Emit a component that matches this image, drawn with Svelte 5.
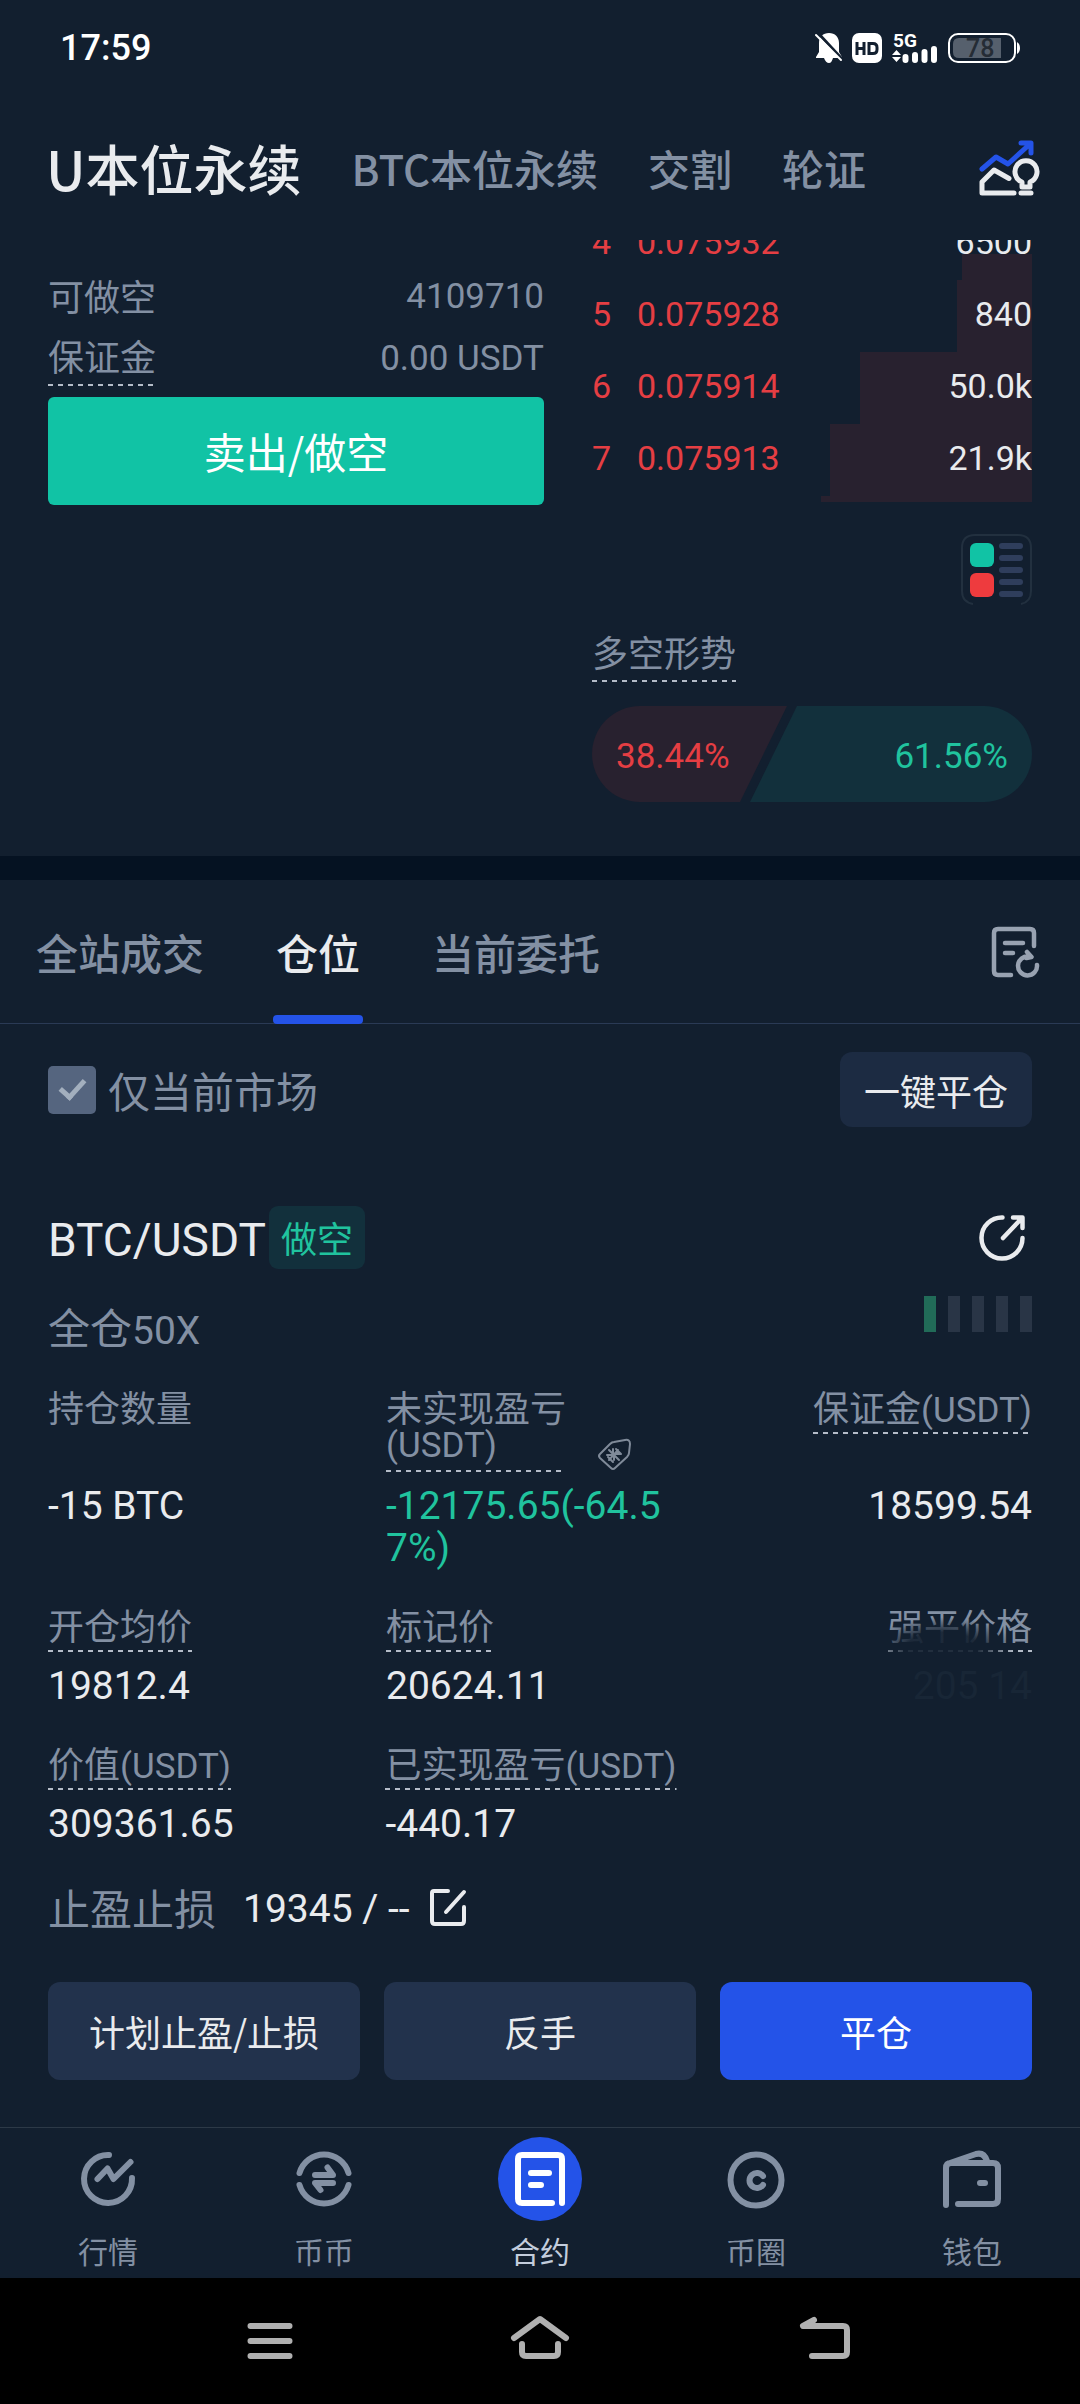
<script lang="ts">
	interface Ask { level: number; price: string; amount: string; depth: number; }
	interface Stat {
		label?: string;
		unit?: string;
		value?: string;
		plain?: boolean;
		wrap?: boolean;
		tag?: boolean;
		faded?: boolean;
		tone?: string;
	}

	const markets = ['U本位永续', 'BTC本位永续', '交割', '轮证'];
	let market = $state(0);

	const asks: Ask[] = [
		{ level: 4, price: '0.075932', amount: '6500', depth: 16 },
		{ level: 5, price: '0.075928', amount: '840', depth: 17 },
		{ level: 6, price: '0.075914', amount: '50.0k', depth: 39 },
		{ level: 7, price: '0.075913', amount: '21.9k', depth: 46 }
	];

	const tabs = ['全站成交', '仓位', '当前委托'];
	let tab = $state(1);
	let onlyCurrent = $state(true);

	const stats: Stat[][] = [
		[
			{ label: '持仓数量', value: '-15 BTC', plain: true },
			{ label: '未实现盈亏', unit: '(USDT)', value: '-12175.65(-64.57%)', wrap: true, tag: true, tone: 'up' },
			{ label: '保证金', unit: '(USDT)', value: '18599.54' }
		],
		[
			{ label: '开仓均价', value: '19812.4' },
			{ label: '标记价', value: '20624.11' },
			{ label: '强平价格', value: '205 14', faded: true }
		],
		[
			{ label: '价值', unit: '(USDT)', value: '309361.65' },
			{ label: '已实现盈亏', unit: '(USDT)', value: '-440.17' },
			{}
		]
	];

	const nav = [
		{ id: 'quotes', label: '行情' },
		{ id: 'spot', label: '币币' },
		{ id: 'contract', label: '合约' },
		{ id: 'circle', label: '币圈' },
		{ id: 'wallet', label: '钱包' }
	];
</script>

<div class="app">
	<div class="status">
		<span class="status__time">17:59</span>
		<div class="status__icons">
			<svg width="28" height="30" viewBox="0 0 28 30">
				<path d="M14 0c6 0 10 4 10 10v9l3 5v1H18c-1 3-2 5-4 5s-4-2-5-5H1v-1l3-5v-9c0-6 4-10 10-10z" fill="#fff" />
				<path d="M3 0l24 26" stroke="#121f2f" stroke-width="3" />
				<path d="M1 2l25 25" stroke="#fff" stroke-width="2" stroke-linecap="round" />
			</svg>
			<svg width="30" height="30" viewBox="0 0 30 30">
				<rect width="30" height="30" rx="7" fill="#fff" />
				<path d="M5 9v13M12 9v13M5 15.500h7M17 10.500h4q4 0 4 4v2q0 4-4 4h-4z" fill="none" stroke="#121f2f" stroke-width="3" />
			</svg>
			<svg width="48" height="30" viewBox="0 0 48 30">
				<text x="2" y="14" class="status__net">5G</text>
				<path d="M1 22l4.500-5 4.500 5zM1 24l4.500 5 4.500-5z" fill="#fff" />
				<path d="M14.500 24v3M24 22v5M33.500 19v8M43 16v11" stroke="#fff" stroke-width="6" stroke-linecap="round" />
			</svg>
			<svg width="72" height="30" viewBox="0 0 72 30">
				<rect x="1" y="1" width="66" height="28" rx="9" fill="none" stroke="#fff" stroke-width="2" />
				<path d="M11 5h42v20H11q-6 0-6-6v-8q0-6 6-6z" fill="#56606d" />
				<path d="M69 9q3 2 3 6t-3 6z" fill="#fff" />
				<text x="18" y="24" class="status__level">78</text>
			</svg>
		</div>
	</div>

	<header class="header">
		<nav class="markets">
			{#each markets as name, i}
				<button class="markets__item" class:active={market === i} onclick={() => (market = i)}>{name}</button>
			{/each}
		</nav>
		<button class="icon-button" aria-label="图表">
			<svg width="62" height="58" viewBox="0 0 62 58" fill="none" stroke-width="5" stroke-linecap="round" stroke-linejoin="round">
				<path d="M4 30L18 18l12 7L52 5M43 4h10v10" stroke="#2453e8" />
				<path d="M31 39.500L16 31 4 43v11h32M44 48v-5a11 11 0 1 1 8 0v5zM43 54h10" stroke="#e9ebee" />
			</svg>
		</button>
	</header>

	<section class="trade">
		<div class="order">
			<div class="order__row">
				<span>可做空</span>
				<span class="latin">4109710</span>
			</div>
			<div class="order__row order__row--margin">
				<span class="dashed">保证金</span>
				<span class="latin">0.00 USDT</span>
			</div>
			<button class="order__submit">卖出/做空</button>
		</div>

		<div class="side">
			<div class="book">
				{#each asks as ask}
					<div class="book__row">
						<span class="book__depth" style="width: {ask.depth}%"></span>
						<span class="book__level">{ask.level}</span>
						<span class="book__price">{ask.price}</span>
						<span class="book__amount">{ask.amount}</span>
					</div>
				{/each}
				<div class="book__tail"></div>
			</div>
			<button class="icon-button book-mode" aria-label="盘口样式">
				<svg width="71" height="70" viewBox="0 0 71 70">
					<path d="M12 70Q1 68 1 57V14Q1 1 14 1H57Q70 1 70 14V57Q70 68 60 70" fill="none" stroke="#22303f" stroke-width="2" />
					<rect x="9" y="9" width="24" height="24" rx="6" fill="#11c3a5" />
					<rect x="9" y="39" width="24" height="24" rx="6" fill="#ee3b3e" />
					<path d="M41 12h18M41 24h18M41 36h18M41 48h18M41 60h18" stroke="#2f3e5c" stroke-width="6" stroke-linecap="round" />
				</svg>
			</button>
			<span class="dashed side__title">多空形势</span>
			<div class="ratio">
				<svg class="ratio__shape" viewBox="0 0 440 96" preserveAspectRatio="none">
					<path d="M48 0H195L148 96H48A48 48 0 0 1 48 0z" fill="#28212f" />
					<path d="M205 0H392A48 48 0 0 1 392 96H158z" fill="#12303c" />
				</svg>
				<span class="ratio__short">38.44%</span>
				<span class="ratio__long">61.56%</span>
			</div>
		</div>
	</section>

	<section class="panel">
		<div class="tabs">
			{#each tabs as name, i}
				<button class="tabs__item" class:active={tab === i} onclick={() => (tab = i)}>{name}</button>
			{/each}
			<button class="icon-button tabs__history" aria-label="历史记录">
				<svg width="50" height="54" viewBox="0 0 50 54" fill="none" stroke="#98a2b1" stroke-width="4.500" stroke-linecap="round" stroke-linejoin="round">
					<path d="M44 21V8q0-4-4-4H8Q4 4 4 8v38q0 4 4 4h13M15 18h18M15 28h8" />
					<path d="M47 40a9.500 9.500 0 1 1-8-8.500M37 27l4.500 5-5 1" />
				</svg>
			</button>
		</div>

		<div class="filter">
			<label class="filter__check">
				<input type="checkbox" bind:checked={onlyCurrent} />
				仅当前市场
			</label>
			<button class="filter__close">一键平仓</button>
		</div>

		<article class="position">
			<div class="position__head">
				<h2>BTC/USDT</h2>
				<span class="position__side">做空</span>
				<button class="icon-button position__share" aria-label="分享">
					<svg width="48" height="48" viewBox="0 0 48 48" fill="none" stroke="#e9ebee" stroke-width="4.500" stroke-linecap="round" stroke-linejoin="round">
						<path d="M24.500 3.500A20.500 20.500 0 1 0 44.500 24M25 24L44 4M35 3.500h9.500V14" />
					</svg>
				</button>
			</div>
			<div class="position__mode">
				<span>全仓<span class="big">50X</span></span>
				<div class="risk">
					{#each [1, 2, 3, 4, 5] as n}
						<span class:on={n === 1}></span>
					{/each}
				</div>
			</div>

			<div class="stats">
				{#each stats as row}
					<div class="stats__row">
						{#each row as s}
							<div class="stats__label">
								{#if s.label}
									<span class:dashed={!s.plain} class:wrap={s.wrap} class:faded={s.faded}>{s.label}{#if s.unit}<span class="latin">{s.unit}</span>{/if}</span>
								{/if}
								{#if s.tag}
									<svg class="stats__tag" width="36" height="36" viewBox="0 0 36 36" fill="none" stroke="#7f8a99" stroke-width="2" stroke-linecap="round" stroke-linejoin="round">
										<path d="M18 6l11-2q5-1 5 4l-1 9q0 2-2 4L19 32q-2 2-4 0L4 22q-2-2 0-4L14 8q2-2 4-2z" />
										<path d="M13 14l10 10M17 13v6h-6M24 18h-6v6M20 13l5 5M12 21l5 5M22 14l-9 10" />
									</svg>
								{/if}
							</div>
						{/each}
						{#each row as s}
							<div class="stats__value {s.tone ?? ''}" class:ghost={s.faded}>{s.value ?? ''}</div>
						{/each}
					</div>
				{/each}
			</div>

			<div class="stop">
				<span class="stop__label">止盈止损</span>
				<span class="big">19345 / --</span>
				<button class="icon-button" aria-label="编辑">
					<svg width="40" height="40" viewBox="0 0 40 40" fill="none" stroke="#e9ebee" stroke-width="4" stroke-linecap="round" stroke-linejoin="round">
						<path d="M20 4H6Q4 4 4 6v28q0 3 3 3h26q3 0 3-3V20M36 5L18 25" />
					</svg>
				</button>
			</div>

			<div class="actions">
				<button>计划止盈/止损</button>
				<button>反手</button>
				<button class="primary">平仓</button>
			</div>
		</article>
	</section>

	<nav class="bottom">
		{#each nav as item}
			<a href="#{item.id}" class="bottom__item" class:active={item.id === 'contract'}>
				<span class="bottom__icon">
					<svg width="60" height="60" viewBox="0 0 60 60" fill="none" stroke="currentColor" stroke-width="6" stroke-linecap="round" stroke-linejoin="round">
						{#if item.id === 'quotes'}
							<path d="M31 6A24 24 0 1 0 54 29M19.500 30L29.500 19.500 35.500 30l17-17" />
						{:else if item.id === 'spot'}
							<path d="M5.500 24a25.500 25.500 0 0 1 49 0M5.500 36a25.500 25.500 0 0 0 49 0M21 26h18l-5.500-7.500M39 34H21l5.500 7" />
						{:else if item.id === 'contract'}
							<path d="M42 54H12q-4 0-4-4V10q0-4 4-4h36q4 0 4 4v44M21 24h18M21 36h10" />
						{:else if item.id === 'circle'}
							<circle cx="30" cy="31" r="25.500" />
							<path d="M37 27a7.500 7.500 0 1 0 0 9" />
						{:else}
							<path d="M4 56V19q0-5 5-5h42q5 0 5 5v31q0 5-5 5H16M8 14L34 5q8-2 11 7M38 34h5" />
						{/if}
					</svg>
				</span>
				{item.label}
			</a>
		{/each}
	</nav>

	<div class="system">
		<button class="icon-button" aria-label="最近任务">
			<svg width="60" height="48" viewBox="0 0 60 48" fill="none" stroke="#b0b0b0" stroke-width="6" stroke-linecap="round">
				<path d="M10.500 9h39M10.500 24h39M10.500 39h39" />
			</svg>
		</button>
		<button class="icon-button" aria-label="主页">
			<svg width="60" height="48" viewBox="0 0 60 48" fill="none" stroke="#b0b0b0" stroke-width="6" stroke-linecap="round" stroke-linejoin="round">
				<path d="M4 21L30 2l26 19M12 27v8q0 4 4 4h28q4 0 4-4v-8" />
			</svg>
		</button>
		<button class="icon-button system__back" aria-label="返回">
			<svg width="60" height="48" viewBox="0 0 60 48" fill="none" stroke="#b0b0b0" stroke-width="6" stroke-linecap="round" stroke-linejoin="round">
				<path d="M19 3L8 9h40q4 0 4 4v22q0 4-4 4H17" />
			</svg>
		</button>
	</div>
</div>

<style>
	:global(body) { background: #121f2f; }

	.app {
		--muted: #8390a3;
		--text: #e9ebee;
		--red: #e53e43;
		--green: #20c39e;
		--blue: #2453e8;
		--digits: Roboto, "Noto Sans CJK SC", sans-serif;
		font-family: "Noto Sans CJK SC", sans-serif;
		font-size: 36px;
		line-height: 48px;
		color: var(--muted);
		background: #121f2f;
	}

	button {
		font: inherit;
		color: inherit;
		background: none;
		border: none;
		padding: 0;
		white-space: nowrap;
		cursor: pointer;
	}

	svg { display: block; flex-shrink: 0; overflow: visible; }

	.icon-button { display: flex; }

	.latin { font-family: var(--digits); font-size: 35px; }
	.big { font-family: var(--digits); font-size: 39px; line-height: 48px; }

	.dashed {
		padding-bottom: 7px;
		background: repeating-linear-gradient(90deg, #b4bcc8 0 5px, transparent 5px 10px) bottom / 100% 2px no-repeat;
	}

	.status {
		display: flex;
		align-items: center;
		justify-content: space-between;
		height: 96px;
		padding: 0 60px;
		font-family: var(--digits);
		color: #fff;
	}

	.status__time { font-size: 36px; font-weight: 500; }
	.status__icons { display: flex; gap: 9px; }
	.status__net { font-size: 19px; font-weight: 700; fill: #fff; }
	.status__level { font-size: 25px; font-weight: 500; fill: #252c35; }

	.header {
		display: flex;
		align-items: center;
		justify-content: space-between;
		height: 144px;
		padding: 0 40px 0 46px;
	}

	.markets { display: flex; align-items: center; gap: 50px; }

	.markets__item { font-size: 42px; font-weight: 500; line-height: 64px; }
	.markets__item.active { font-size: 54px; color: var(--text); }

	.trade {
		display: grid;
		grid-template-columns: 496fr 440fr;
		gap: 48px;
		padding: 0 48px 54px;
	}

	.order { padding-top: 23px; }

	.order__row {
		display: flex;
		align-items: center;
		justify-content: space-between;
		height: 64px;
	}

	.order__row .latin { padding-top: 4px; }

	.order__row--margin { align-items: flex-start; height: 66px; padding-top: 4px; }

	.order__submit {
		width: 100%;
		height: 108px;
		border-radius: 6px;
		font-size: 42px;
		color: #fff;
		background: #11c3a5;
	}

	.side { display: flex; flex-direction: column; align-items: flex-start; }

	.book {
		width: 100%;
		overflow: hidden;
		font-family: var(--digits);
		font-size: 34px;
	}

	.book__row {
		position: relative;
		display: flex;
		align-items: center;
		height: 68px;
		padding-bottom: 4px;
		color: var(--red);
	}

	.book__row:first-child { margin-top: -32px; }

	.book__depth {
		position: absolute;
		top: 0;
		right: 0;
		bottom: 0;
		background: #28212f;
	}

	.book__row:first-child .book__depth { top: 46px; }

	.book__level { position: relative; width: 45px; }
	.book__price { position: relative; }
	.book__amount { position: relative; margin-left: auto; color: var(--text); }

	.book__tail { width: 48%; height: 6px; margin-left: auto; background: #28212f; }

	.book-mode { align-self: flex-end; margin-top: 32px; }

	.side__title { margin: 23px 0 24px; }

	.ratio {
		position: relative;
		display: flex;
		align-items: center;
		justify-content: space-between;
		width: 100%;
		height: 96px;
		padding: 0 24px;
		box-sizing: border-box;
		font-family: var(--digits);
		font-size: 35px;
	}

	.ratio__shape { position: absolute; inset: 0; width: 100%; height: 100%; }
	.ratio__short { position: relative; padding-top: 6px; color: var(--red); }
	.ratio__long { position: relative; padding-top: 6px; color: var(--green); }

	.panel { border-top: 24px solid #051222; }

	.tabs {
		display: flex;
		align-items: stretch;
		gap: 72px;
		height: 143px;
		padding: 0 40px 0 36px;
		border-bottom: 1px solid #2a3a55;
	}

	.tabs__item { position: relative; font-size: 42px; font-weight: 500; }
	.tabs__item.active { color: var(--text); }

	.tabs__item.active::after {
		content: "";
		position: absolute;
		left: -3px;
		right: -3px;
		bottom: -1px;
		height: 9px;
		border-radius: 4px;
		background: var(--blue);
	}

	.tabs__history { align-items: center; margin-left: auto; }

	.filter {
		display: flex;
		align-items: center;
		justify-content: space-between;
		padding: 28px 48px 0;
	}

	.filter__check { display: flex; align-items: center; gap: 12px; font-size: 42px; }

	.filter__check input {
		appearance: none;
		width: 48px;
		height: 48px;
		margin: 0;
		border-radius: 5px;
		background: #55657f;
	}

	.filter__check input:checked::after {
		content: "";
		display: block;
		width: 10px;
		height: 20px;
		margin: 8px auto;
		border: solid #a3afbe;
		border-width: 0 5px 5px 0;
		transform: rotate(42deg);
	}

	.filter__close {
		height: 75px;
		padding: 0 24px;
		border-radius: 12px;
		color: var(--text);
		background: #1c2b42;
	}

	.position { padding: 79px 48px 47px; }

	.position__head { display: flex; align-items: center; gap: 3px; }

	h2 {
		margin: 0;
		padding-top: 5px;
		font-family: var(--digits);
		font-size: 46px;
		font-weight: 400;
		color: var(--text);
	}

	.position__side {
		padding: 0 12px;
		border-radius: 9px;
		line-height: 63px;
		color: var(--green);
		background: #12303c;
	}

	.position__share { margin: 0 6px 0 auto; }

	.position__mode {
		display: flex;
		align-items: flex-start;
		justify-content: space-between;
		margin-top: 27px;
		font-size: 42px;
		line-height: 60px;
	}

	.risk { display: flex; gap: 12px; }
	.risk span { width: 12px; height: 36px; background: #293546; }
	.risk .on { background: #216b58; }

	.stats {
		display: flex;
		flex-direction: column;
		gap: 36px;
		margin-top: 31px;
	}

	.stats__row {
		display: grid;
		grid-template-columns: 338fr 290fr 356fr;
		row-gap: 13px;
	}

	.stats__label {
		display: flex;
		align-items: flex-start;
		line-height: 38px;
		white-space: nowrap;
	}

	.stats__label .dashed { padding-bottom: 9px; }
	.stats__label .latin { line-height: 28px; }

	.stats__label:nth-child(3n), .stats__value:nth-child(3n) {
		justify-content: flex-end;
		text-align: right;
	}

	.stats__label .wrap { width: 180px; padding-bottom: 5px; white-space: normal; }
	.stats__label .wrap .latin { display: block; line-height: 42px; }

	.stats__tag { align-self: flex-end; margin-left: 30px; }

	.stats__value {
		font-family: var(--digits);
		font-size: 39px;
		line-height: 42px;
		color: var(--text);
		word-break: break-all;
	}

	.stats__value.up { color: var(--green); }

	.faded { position: relative; }

	.faded::after {
		content: "";
		position: absolute;
		inset: 0;
		background: radial-gradient(ellipse 72px 30px at 38% 90%, rgb(18 31 47 / 90%) 50%, transparent);
	}

	.stats__value.ghost { color: #182636; }

	.stop {
		display: flex;
		align-items: center;
		margin-top: 36px;
		color: var(--text);
	}

	.stop__label { margin-right: 27px; font-size: 42px; color: var(--muted); }
	.stop .big { padding-top: 4px; }
	.stop .icon-button { margin-left: 18px; }

	.actions {
		display: grid;
		grid-template-columns: repeat(3, 1fr);
		gap: 24px;
		margin-top: 49px;
	}

	.actions button {
		height: 98px;
		border-radius: 12px;
		color: var(--text);
		background: #22324c;
	}

	.actions .primary { color: #fff; background: var(--blue); }

	.bottom {
		display: grid;
		grid-template-columns: repeat(5, 1fr);
		padding: 9px 0 10px;
		border-top: 1px solid #2c3947;
	}

	.bottom__item {
		display: flex;
		flex-direction: column;
		align-items: center;
		gap: 11px;
		font-size: 30px;
		line-height: 36px;
		color: var(--muted);
		text-decoration: none;
	}

	.bottom__icon {
		display: grid;
		place-items: center;
		width: 84px;
		height: 84px;
		border-radius: 50%;
	}

	.bottom__item.active { color: #c3cddd; }
	.bottom__item.active .bottom__icon { color: #fff; background: var(--blue); }

	.system {
		display: grid;
		grid-template-columns: repeat(3, 1fr);
		justify-items: center;
		align-items: center;
		height: 126px;
		padding: 0 135px;
		background: #000;
	}

	.system__back { margin-left: 30px; }
</style>
